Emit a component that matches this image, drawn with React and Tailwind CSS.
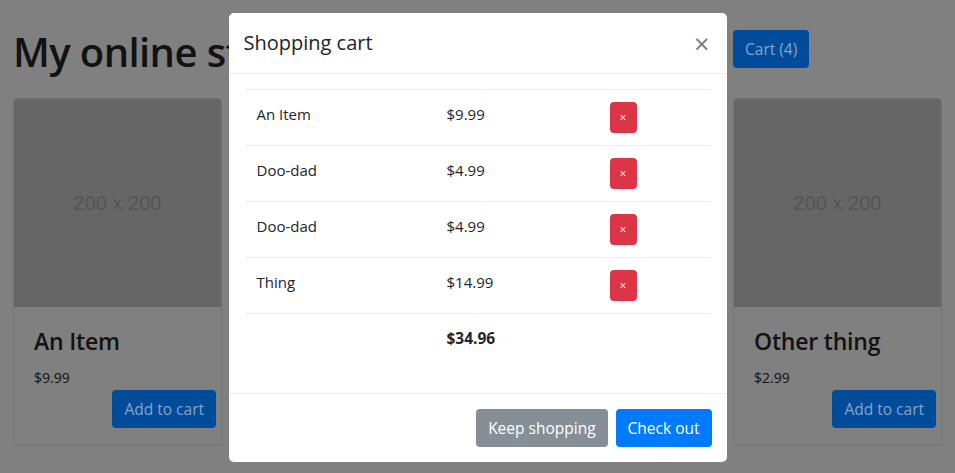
import React from "react";

const products = [
  { name: "An Item", price: "$9.99" },
  { name: "Doo-dad", price: "$4.99" },
  { name: "Thing", price: "$14.99" },
  { name: "Other thing", price: "$2.99" },
];

const cart = [
  { name: "An Item", price: "$9.99" },
  { name: "Doo-dad", price: "$4.99" },
  { name: "Doo-dad", price: "$4.99" },
  { name: "Thing", price: "$14.99" },
];

function Card({ p, hidden }) {
  return (
    <div className="flex h-[348px] flex-col rounded-[4px] border border-[#737373] bg-[#808080]">
      <div className="flex h-[208px] items-center justify-center rounded-t-[3px] bg-[#666666]">
        {!hidden && (
          <span
            className="text-[20px] text-[#555555]"
            style={{ fontFamily: '"Liberation Sans", Arial, sans-serif' }}
          >
            200 x 200
          </span>
        )}
      </div>
      {!hidden && (
        <div className="flex flex-col px-[20px] pt-[20px]">
          <div className="text-[23px] font-semibold leading-[29px] tracking-[-0.2px] text-[#111213]">
            {p.name}
          </div>
          <div className="mt-[10px] text-[14px] leading-[24px] text-[#111213]">{p.price}</div>
          <div className="-mr-[15px] flex justify-end">
            <button className="h-[38px] rounded-[4px] bg-[#004c9a] px-[12px] text-[15.5px] leading-[24px] text-[#88a3cc]">
              Add to cart
            </button>
          </div>
        </div>
      )}
    </div>
  );
}

export default function App() {
  return (
    <div
      className="relative h-[473px] w-[955px] overflow-hidden bg-[#808080]"
      style={{ fontFamily: '"Open Sans", "Noto Sans", sans-serif' }}
    >
      <div className="px-[13px] pt-[28px]">
        <div className="grid grid-cols-[209px_209px_209px_209px] gap-x-[31px]">
          <h1 className="col-span-3 whitespace-nowrap text-[40px] font-semibold leading-[48px] tracking-[-0.6px] text-[#111213]">
            My online store
          </h1>
          <div className="flex items-start pt-[2px]">
            <button className="h-[38px] rounded-[4px] bg-[#004c9a] px-[12px] text-[15.5px] leading-[24px] text-[#88a3cc]">
              Cart (4)
            </button>
          </div>
        </div>
        <div className="mt-[22px] grid grid-cols-[209px_209px_209px_209px] gap-x-[31px]">
          {products.map((p, i) => (
            <Card key={i} p={p} hidden={i === 1 || i === 2} />
          ))}
        </div>
      </div>

      {/* Modal overlay */}
      <div className="absolute inset-0 flex justify-center">
        <div className="mt-[13px] h-[449px] w-[498px] rounded-[5px] bg-white text-[#212529]">
          <div className="flex h-[61px] items-center justify-between border-b border-[#e9ecef] pl-[15px] pr-[17px]">
            <h5 className="text-[20px] font-medium leading-[30px]">Shopping cart</h5>
            <span className="text-[27px] font-normal leading-none text-[#7a7a7a]">×</span>
          </div>
          <div className="px-[16px] pt-[15px]">
            <table className="w-full border-collapse text-[15px]">
              <tbody>
                {cart.map((c, i) => (
                  <tr key={i} className="border-t border-[#e9ecef]">
                    <td className="w-[190px] p-[12px] align-top leading-[24px]">{c.name}</td>
                    <td className="w-[163px] p-[12px] align-top leading-[24px]">{c.price}</td>
                    <td className="p-[12px] align-top">
                      <button className="flex h-[31px] w-[27px] items-center justify-center rounded-[4px] bg-[#dc3545] text-[12px] leading-none text-white">
                        ×
                      </button>
                    </td>
                  </tr>
                ))}
                <tr className="border-t border-[#e9ecef]">
                  <td className="p-[12px] leading-[24px]"></td>
                  <td className="p-[12px] text-[15.5px] font-bold leading-[24px]">$34.96</td>
                  <td className="p-[12px]"></td>
                </tr>
              </tbody>
            </table>
          </div>
          <div className="mt-[31px] flex justify-end gap-[8px] border-t border-[#e9ecef] px-[15px] pt-[15px]">
            <button className="h-[38px] rounded-[4px] bg-[#868e96] px-[12px] text-[15.5px] leading-[24px] text-white">
              Keep shopping
            </button>
            <button className="h-[38px] rounded-[4px] bg-[#007bff] px-[12px] text-[15.5px] leading-[24px] text-white">
              Check out
            </button>
          </div>
        </div>
      </div>
    </div>
  );
}
